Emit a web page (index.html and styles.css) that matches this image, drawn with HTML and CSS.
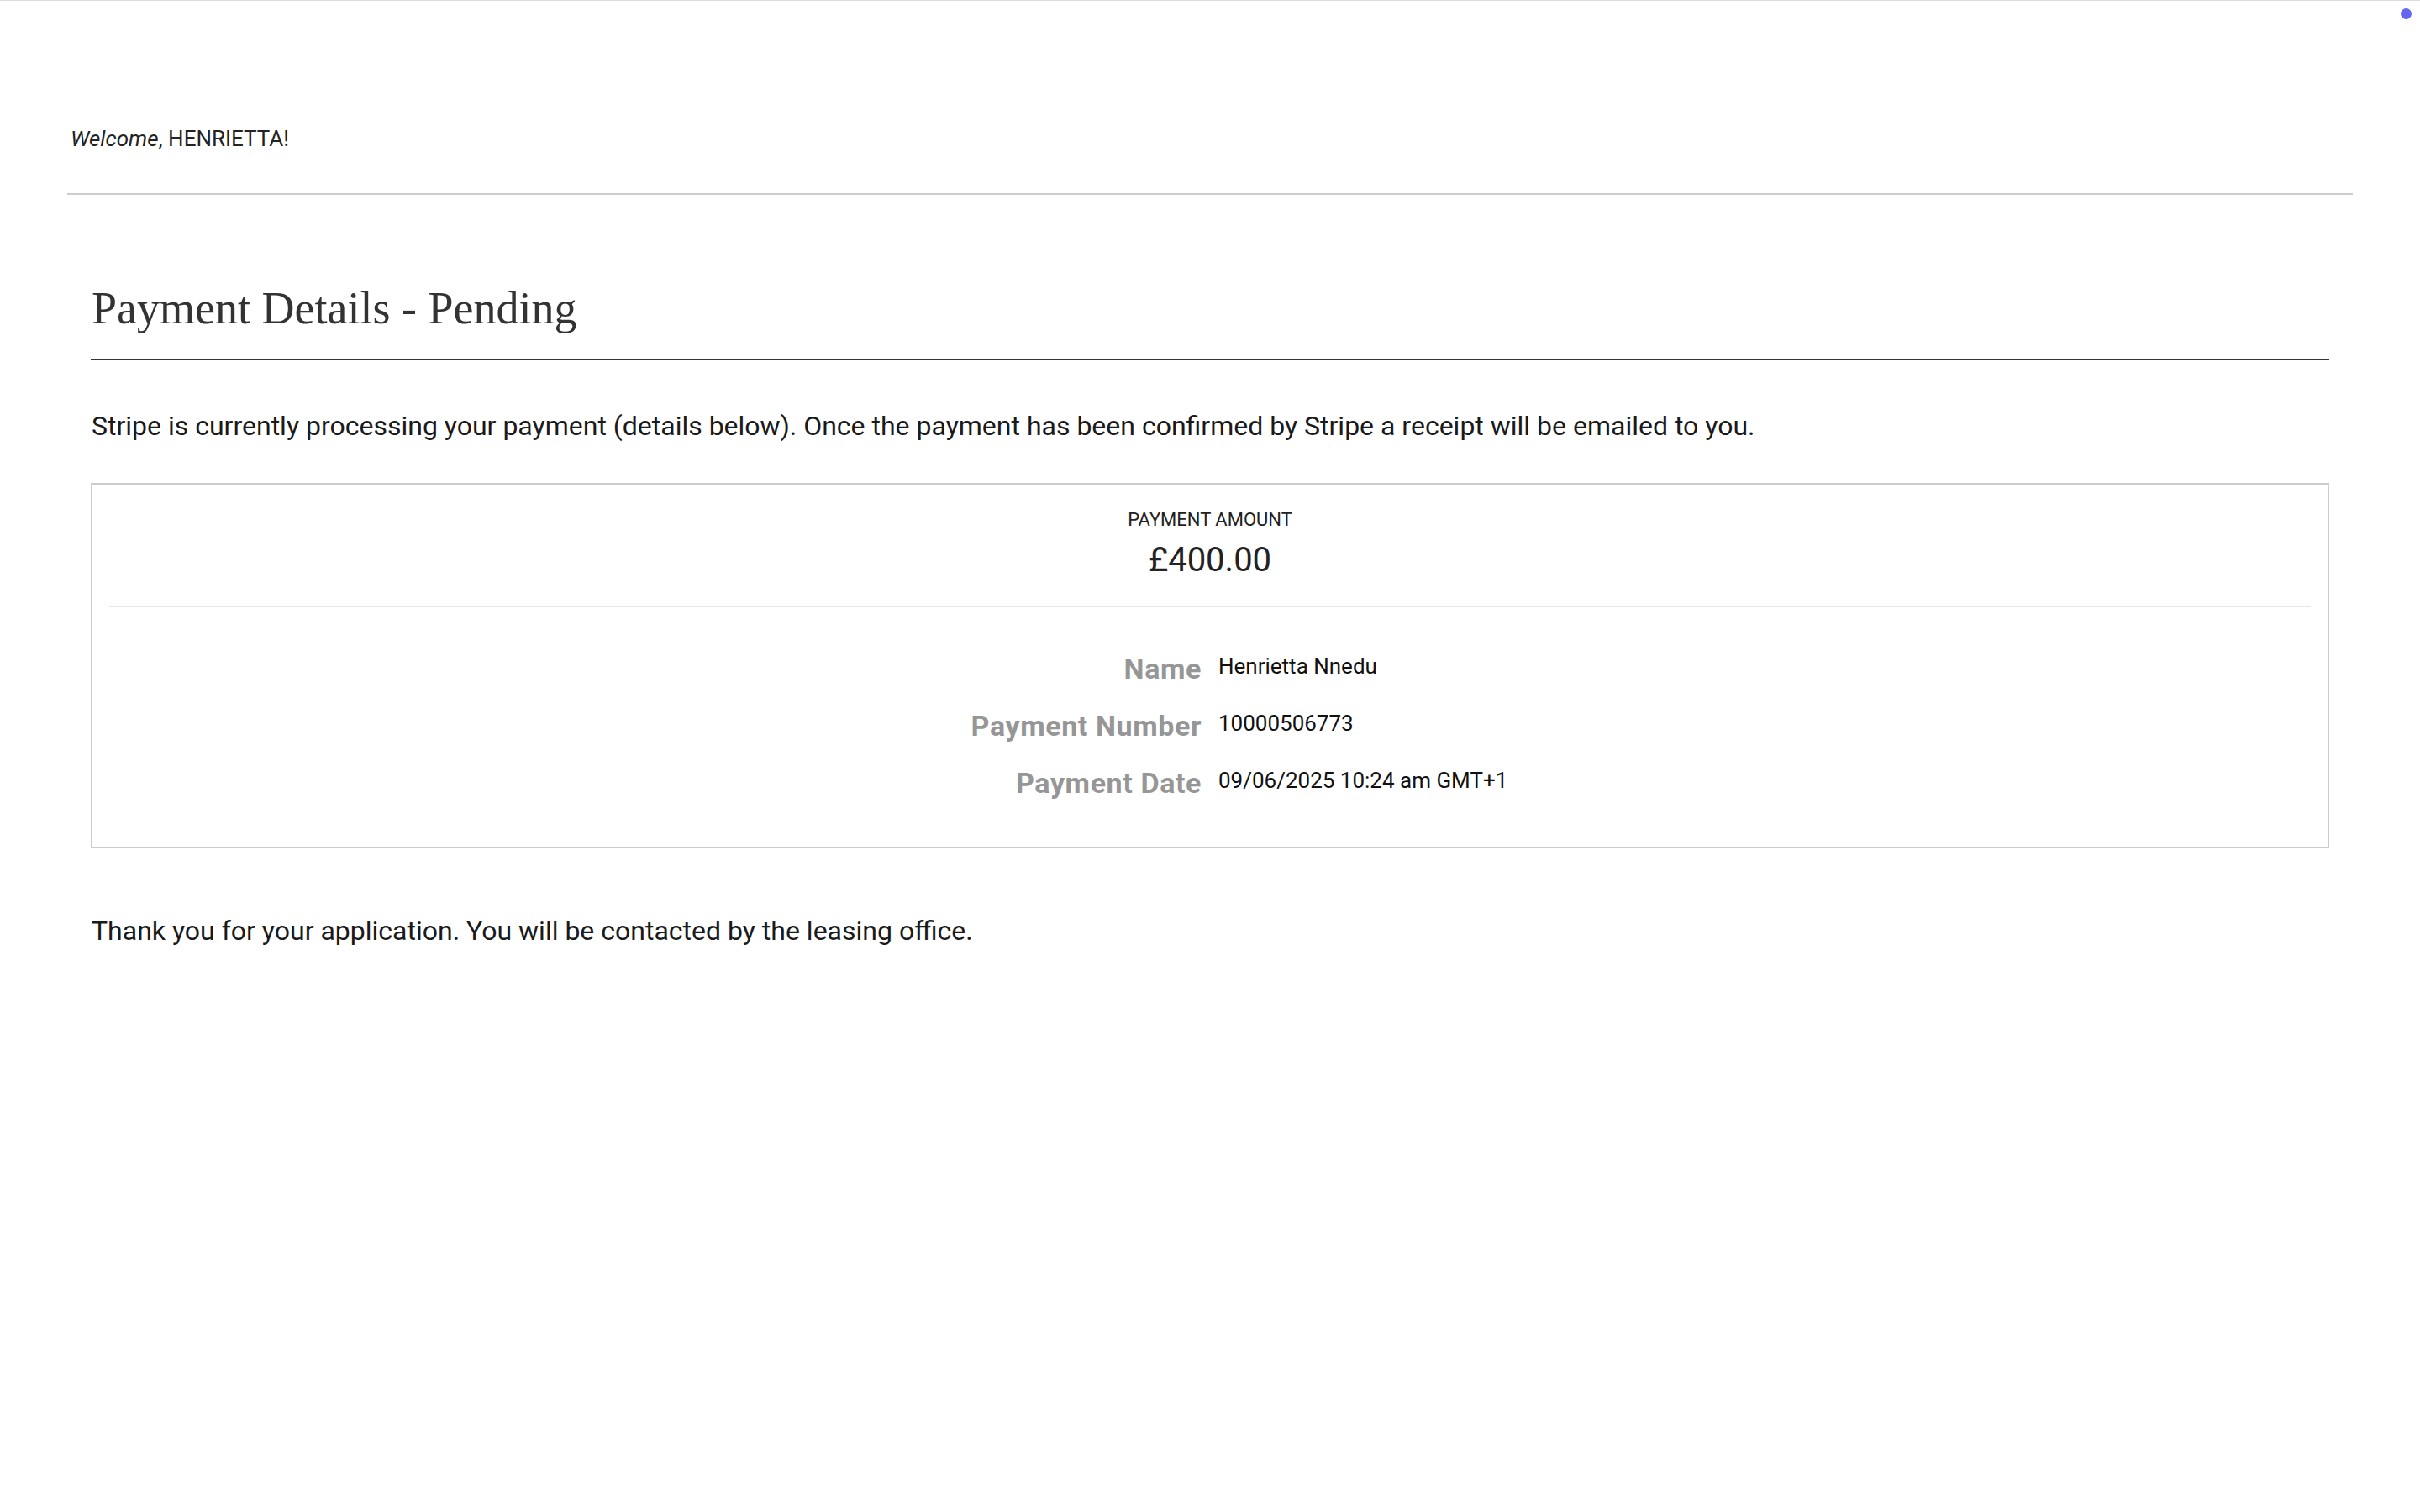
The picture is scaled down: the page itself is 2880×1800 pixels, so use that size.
FILE: index.html
```html
<!DOCTYPE html>
<html lang="en">
<head>
<meta charset="utf-8">
<title>Payment Details - Pending</title>
<link rel="stylesheet" href="styles.css">
</head>
<body>
<span class="status-dot"></span>
<header class="header">
  <p class="welcome"><em>Welcome</em>, HENRIETTA!</p>
</header>
<main class="main">
  <h1 class="title">Payment Details - Pending</h1>
  <p class="text intro">Stripe is currently processing your payment (details below). Once the payment has been confirmed by Stripe a receipt will be emailed to you.</p>
  <section class="card">
    <div class="amount">
      <div class="amount-label">PAYMENT AMOUNT</div>
      <div class="amount-value">£400.00</div>
    </div>
    <dl class="details">
      <dt class="label">Name</dt>
      <dd class="value">Henrietta Nnedu</dd>
      <dt class="label">Payment Number</dt>
      <dd class="value">10000506773</dd>
      <dt class="label">Payment Date</dt>
      <dd class="value">09/06/2025 10:24 am GMT+1</dd>
    </dl>
  </section>
  <p class="text thanks">Thank you for your application. You will be contacted by the leasing office.</p>
</main>
</body>
</html>
```
FILE: styles.css
```css
html, body {
  margin: 0;
  padding: 0;
  background: #ffffff;
}
body {
  font-family: Roboto, "Liberation Sans", Arial, sans-serif;
  color: #222222;
  border-top: 1px solid #dcdcdc;
  position: relative;
  min-height: 1799px;
}
.status-dot {
  position: absolute;
  top: 9px;
  right: 10px;
  width: 13px;
  height: 13px;
  border-radius: 50%;
  background: #6366f1;
}
.header {
  margin: 0 80px;
  padding: 149px 0 50px 4px;
  border-bottom: 2px solid #cccccc;
}
.welcome {
  margin: 0;
  font-size: 26px;
  line-height: 30px;
  color: #222222;
}
.welcome em {
  font-style: italic;
}
.main {
  margin: 0 108px;
}
.title {
  margin: 106px 0 0;
  padding: 0 0 31px 1px;
  font-family: "Liberation Serif", "Times New Roman", serif;
  font-weight: normal;
  font-size: 54px;
  line-height: 58px;
  color: #333333;
  border-bottom: 2px solid #333333;
}
.text {
  margin: 0;
  font-size: 32px;
  line-height: 38px;
  color: #1a1a1a;
  padding-left: 1px;
}
.intro {
  margin-top: 59px;
}
.card {
  margin-top: 49px;
  border: 2px solid #cccccc;
  padding: 0 20px;
}
.amount {
  display: flex;
  flex-direction: column;
  align-items: center;
  padding: 29px 0 31px;
  border-bottom: 2px solid #e6e6e6;
}
.amount-label {
  font-size: 22px;
  line-height: 26px;
  color: #222222;
}
.amount-value {
  margin-top: 11px;
  font-size: 40px;
  line-height: 47px;
  color: #222222;
}
.details {
  display: grid;
  grid-template-columns: 1fr 1fr;
  column-gap: 20px;
  row-gap: 28px;
  margin: 0;
  padding: 53px 0 56px;
  align-items: start;
}
.label {
  margin: 0;
  text-align: right;
  font-weight: bold;
  font-size: 34px;
  line-height: 40px;
  letter-spacing: 0.6px;
  color: #969696;
}
.value {
  margin: 2px 0 0;
  font-size: 26px;
  line-height: 30px;
  color: #111111;
}
.thanks {
  margin-top: 79px;
}
```
